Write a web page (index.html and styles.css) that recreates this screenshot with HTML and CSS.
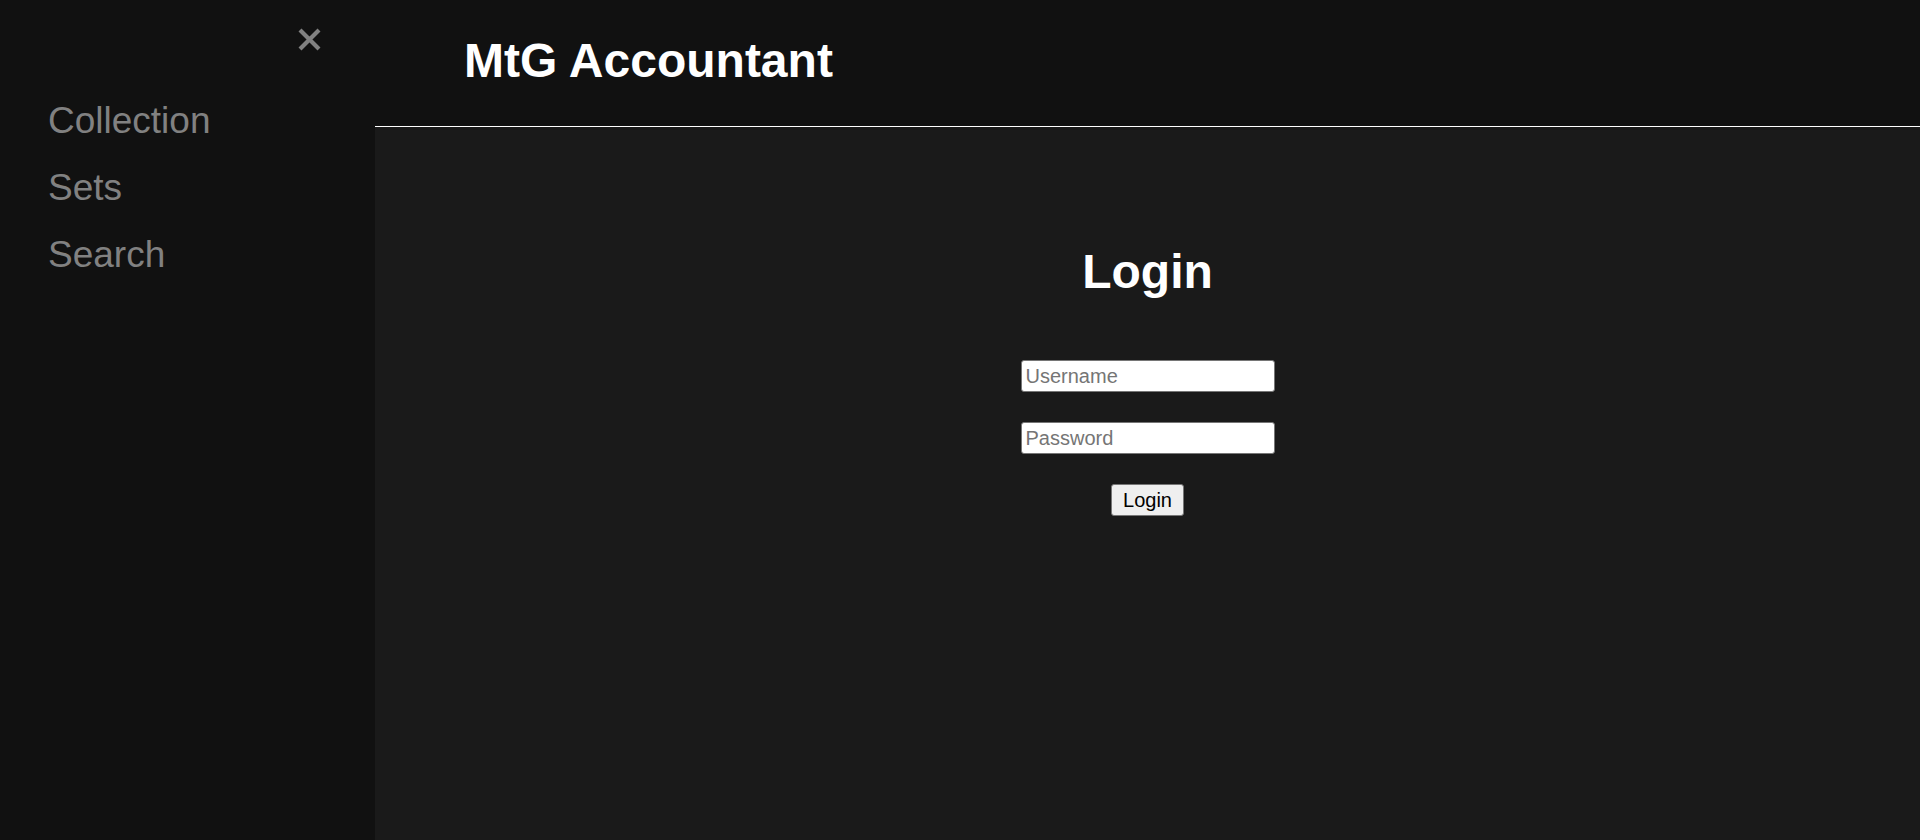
FILE: index.html
```html
<!DOCTYPE html>
<html lang="en">
<head>
<meta charset="utf-8">
<title>MtG Accountant</title>
<link rel="stylesheet" href="styles.css">
</head>
<body>
<div class="app">
  <aside class="sidebar">
    <div class="close-row">
      <a class="closebtn" href="#" aria-label="Close">
        <svg width="23" height="23" viewBox="0 0 23 23"><path d="M2 2 L21 21 M21 2 L2 21" stroke="#818181" stroke-width="4.2" stroke-linecap="butt" fill="none"/></svg>
      </a>
    </div>
    <nav class="nav">
      <a href="#" class="nav-link">Collection</a>
      <a href="#" class="nav-link">Sets</a>
      <a href="#" class="nav-link">Search</a>
    </nav>
  </aside>
  <div class="main">
    <header class="header">
      <h1 class="brand">MtG Accountant</h1>
    </header>
    <section class="content">
      <h2 class="login-title">Login</h2>
      <form class="login-form">
        <input class="field" type="text" placeholder="Username">
        <input class="field" type="password" placeholder="Password">
        <button class="btn" type="button">Login</button>
      </form>
    </section>
  </div>
</div>
</body>
</html>
```
FILE: styles.css
```css
html, body {
  margin: 0;
  padding: 0;
  height: 100%;
}
body {
  font-family: "Liberation Sans", Arial, sans-serif;
  background: #1a1a1a;
}
.app {
  display: flex;
  min-height: 100vh;
}
.sidebar {
  width: 375px;
  flex: 0 0 375px;
  background: #111111;
}
.close-row {
  display: flex;
  justify-content: flex-end;
  padding: 28px 54px 0 0;
}
.closebtn {
  display: block;
  width: 23px;
  height: 23px;
}
.closebtn svg {
  display: block;
}
.nav {
  display: flex;
  flex-direction: column;
  padding: 36px 0 0 48px;
}
.nav-link {
  color: #818181;
  text-decoration: none;
  font-size: 37px;
  line-height: 67px;
}
.main {
  flex: 1;
  display: flex;
  flex-direction: column;
  background: #1a1a1a;
}
.header {
  background: #111111;
  height: 126px;
  box-sizing: border-box;
  border-bottom: 1px solid #ffffff;
  padding: 37px 0 0 89px;
  height: 127px;
}
.brand {
  margin: 0;
  color: #ffffff;
  font-size: 48px;
  line-height: 48px;
  font-weight: bold;
}
.content {
  display: flex;
  flex-direction: column;
  align-items: center;
  padding-top: 117px;
}
.login-title {
  margin: 0;
  color: #ffffff;
  font-size: 48px;
  line-height: 55px;
  font-weight: bold;
}
.login-form {
  display: flex;
  flex-direction: column;
  align-items: center;
  gap: 30px;
  margin-top: 61px;
}
.field {
  box-sizing: border-box;
  width: 254px;
  height: 32px;
  padding: 0 4px;
  border: 1px solid #767676;
  border-radius: 3px;
  background: #ffffff;
  font-family: "Liberation Sans", Arial, sans-serif;
  font-size: 20px;
  color: #000;
}
.field::placeholder {
  color: #757575;
}
.btn {
  box-sizing: border-box;
  height: 32px;
  padding: 0 11px;
  border: 1px solid #767676;
  border-radius: 3px;
  background: #efefef;
  font-family: "Liberation Sans", Arial, sans-serif;
  font-size: 20px;
  color: #000;
}
```
